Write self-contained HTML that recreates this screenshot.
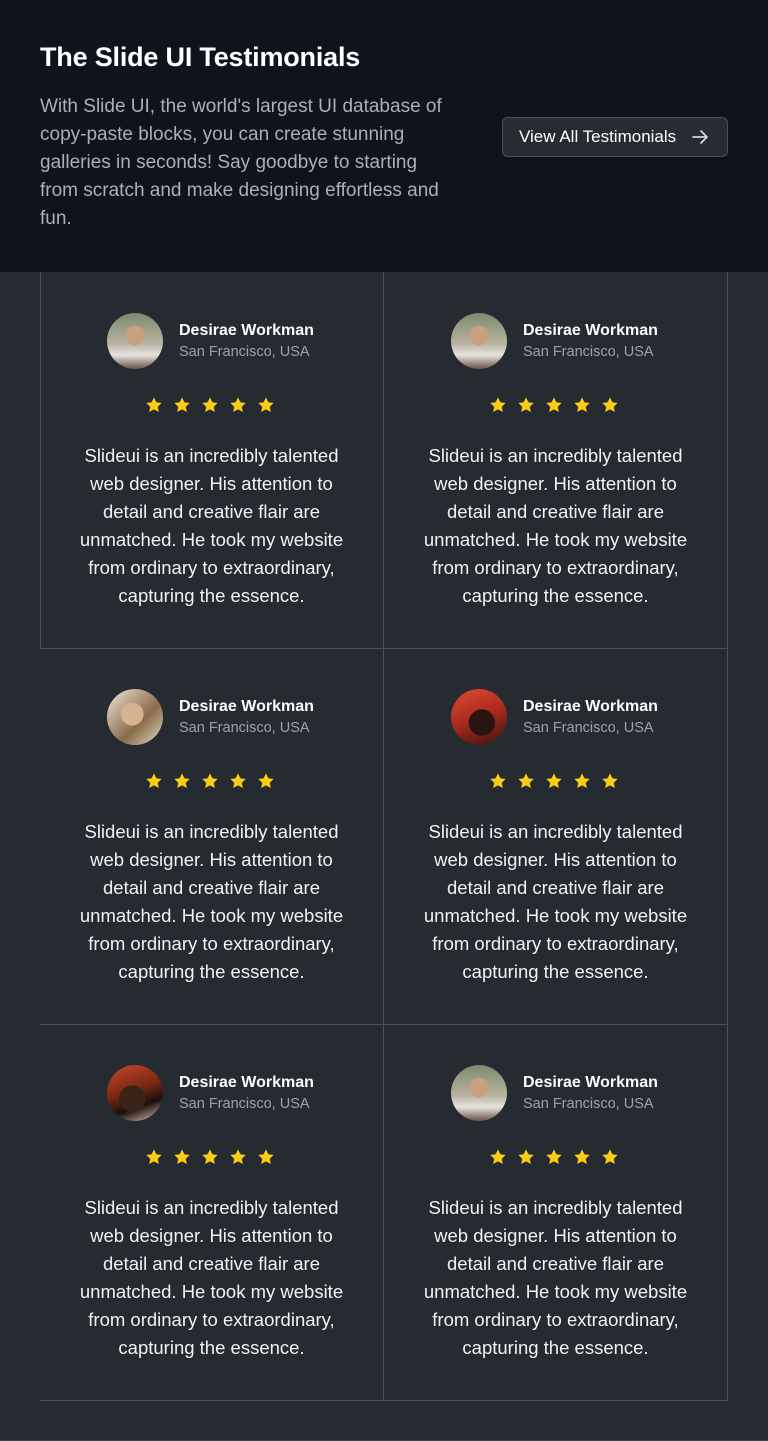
<!DOCTYPE html>
<html><head><meta charset="utf-8"><style>
*{margin:0;padding:0;box-sizing:border-box}
body{width:768px;height:1441px;background:#262b31;font-family:"Liberation Sans",sans-serif;position:relative;overflow:hidden}
.hdr{position:absolute;left:0;top:0;width:768px;height:272px;background:#0e131c}
h1{position:absolute;left:40px;top:42px;font-size:27px;font-weight:bold;color:#fff;letter-spacing:-0.2px}
.desc{position:absolute;left:40px;top:93px;width:440px;font-size:19px;line-height:28px;color:#aab0b9;white-space:nowrap}
.btn{position:absolute;left:502px;top:117px;width:226px;height:40px;border:1px solid #4a5058;border-radius:6px;background:#272c32;color:#fff;font-size:17px;line-height:38px;padding-left:16px}
.btn svg{position:absolute;right:18px;top:10px}
.l{position:absolute;background:#4b5159}
.cell{position:absolute;width:343px;height:376px}
.av{position:absolute;left:67px;top:41px;width:56px;height:56px;border-radius:50%;overflow:hidden}
.nm{position:absolute;left:139px;top:50px;font-size:16px;font-weight:bold;color:#fff}
.loc{position:absolute;left:139px;top:72px;font-size:14.5px;color:#9ca3ad}
.st{position:absolute;left:105px;top:124px;display:flex;gap:10px}
.q{position:absolute;left:-10px;top:170px;width:363px;text-align:center;font-size:18.5px;line-height:28px;color:#f0f2f4;white-space:nowrap}
</style></head><body>
<div class="hdr"></div>
<h1>The Slide UI Testimonials</h1>
<div class="desc">With Slide UI, the world's largest UI database of<br>copy-paste blocks, you can create stunning<br>galleries in seconds! Say goodbye to starting<br>from scratch and make designing effortless and<br>fun.</div>
<div class="btn">View All Testimonials<svg width="18" height="18" viewBox="0 0 18 18" fill="none" stroke="#d0d4d9" stroke-width="1.8" stroke-linecap="round" stroke-linejoin="round"><path d="M2 9h14M10 3l6 6-6 6"/></svg></div>

<div class="l" style="left:40px;top:272px;width:1px;height:376px"></div>
<div class="l" style="left:383px;top:272px;width:1px;height:1128px"></div>
<div class="l" style="left:727px;top:272px;width:1px;height:1128px"></div>
<div class="l" style="left:40px;top:648px;width:688px;height:1px"></div>
<div class="l" style="left:40px;top:1024px;width:688px;height:1px"></div>
<div class="l" style="left:40px;top:1400px;width:688px;height:1px"></div>
<div class="l" style="left:0;top:1440px;width:768px;height:1px;background:#3a4048"></div>

<div id="cells"></div>
<script>
const av=[
'radial-gradient(circle at 50% 40%,#c9a07f 0 22%,transparent 23%),linear-gradient(#7d8a6e 0,#b9b3a3 55%,#e6e4df 75%,#6a5045 100%)',
'radial-gradient(circle at 45% 45%,#d7b48f 0 25%,transparent 27%),linear-gradient(135deg,#f2e8d8,#8a6a4a 60%,#e8dcc6)',
'radial-gradient(circle at 55% 60%,#2a1412 0 28%,transparent 30%),linear-gradient(160deg,#e04a32,#a82a1e 50%,#3a1410)',
'radial-gradient(circle at 45% 60%,#3a2418 0 28%,transparent 30%),linear-gradient(160deg,#c8462a,#7a2814 45%,#1a0f0c 70%,#e0c8b8)'];
const pics=[0,0,1,2,3,0];
const star='<svg width="18" height="18" viewBox="0 0 24 24"><path fill="#facc15" d="M12 1.8l3.1 6.6 7.2.9-5.3 5 1.4 7.1L12 17.9l-6.4 3.5 1.4-7.1-5.3-5 7.2-.9z"/></svg>';
let h='';
for(let i=0;i<6;i++){const x=40+(i%2)*344,y=272+Math.floor(i/2)*376;
h+=`<div class="cell" style="left:${x}px;top:${y}px"><div class="av" style="background:${av[pics[i]]}"></div><div class="nm">Desirae Workman</div><div class="loc">San Francisco, USA</div><div class="st">${star.repeat(5)}</div><div class="q">Slideui is an incredibly talented<br>web designer. His attention to<br>detail and creative flair are<br>unmatched. He took my website<br>from ordinary to extraordinary,<br>capturing the essence.</div></div>`;}
document.getElementById('cells').innerHTML=h;
</script>
</body></html>
